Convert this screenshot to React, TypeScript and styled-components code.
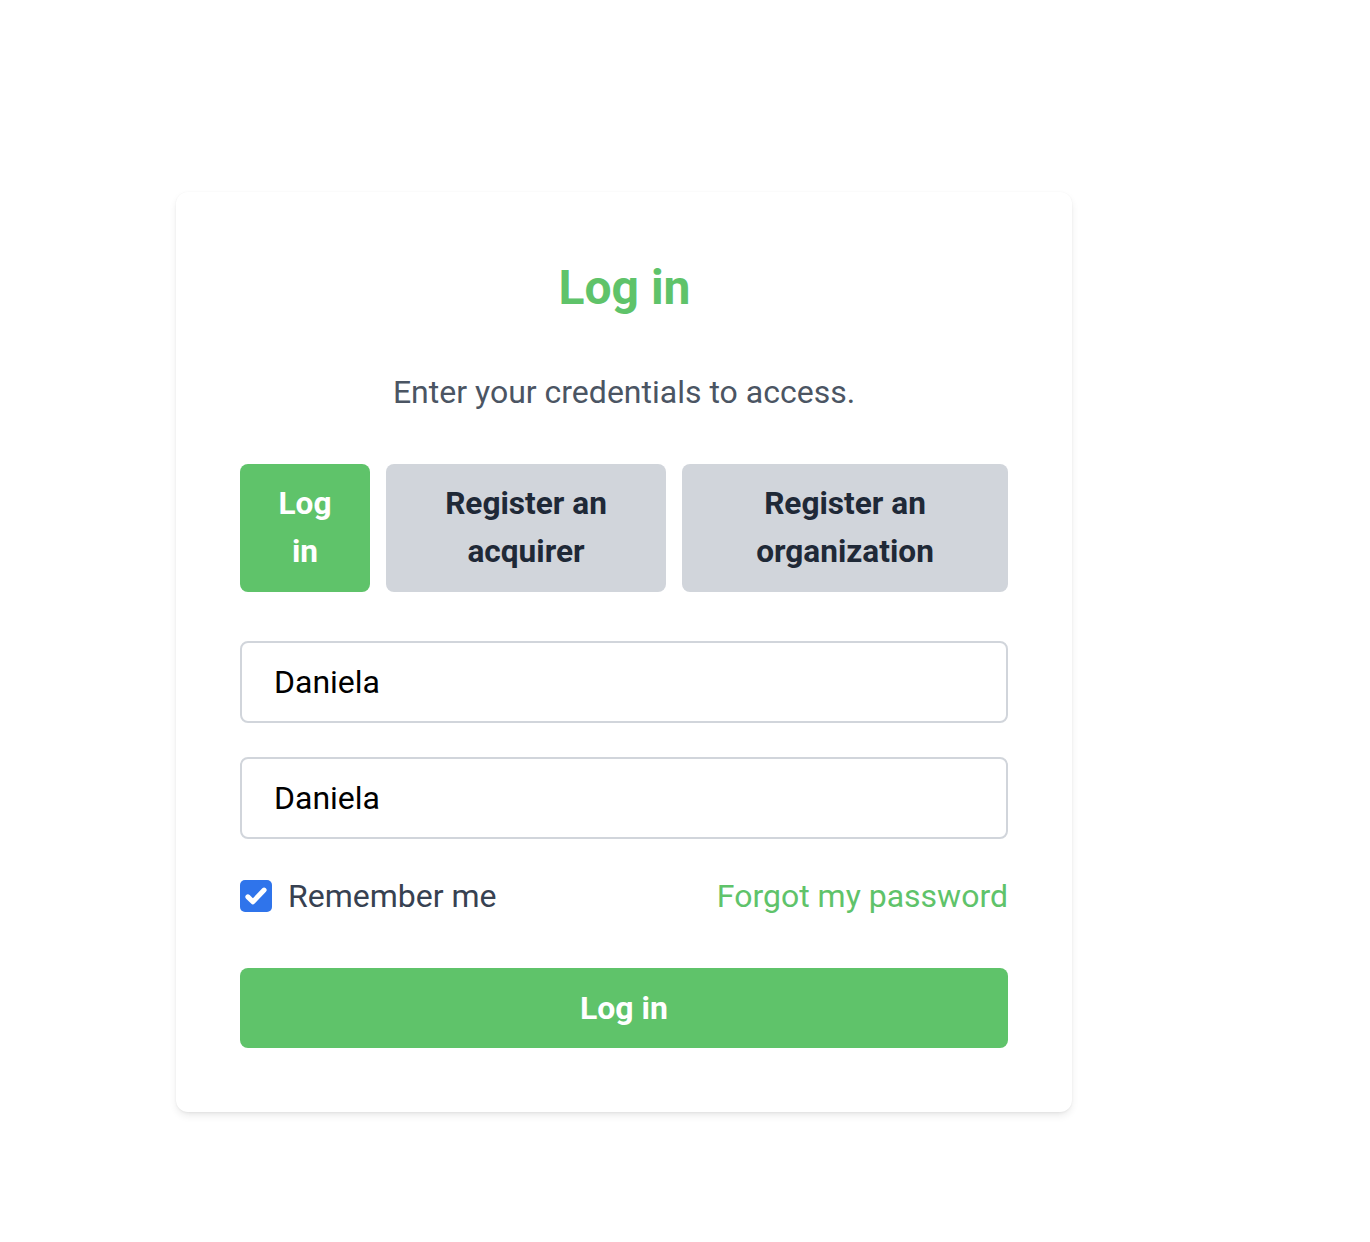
import React from "react";
import styled, { createGlobalStyle } from "styled-components";

const GlobalStyle = createGlobalStyle`
  html, body { margin: 0; padding: 0; background: #ffffff; }
  body { font-family: Roboto, "Liberation Sans", Arial, sans-serif; }
  * { box-sizing: border-box; }
`;

const GREEN = "#5fc36a";

const Page = styled.div`
  min-height: 1242px;
  padding: 192px 0 0 176px;
`;

const Card = styled.div`
  width: 896px;
  background: #ffffff;
  border-radius: 12px;
  box-shadow: 0 4px 8px -1px rgba(0, 0, 0, 0.09), 0 2px 4px -2px rgba(0, 0, 0, 0.08), 0 0 2px rgba(0,0,0,0.04);
  padding: 64px;
  display: flex;
  flex-direction: column;
`;

const Title = styled.h1`
  margin: 0 0 0 1px;
  text-align: center;
  color: ${GREEN};
  font-size: 48px;
  line-height: 64px;
  font-weight: 700;
`;

const Subtitle = styled.p`
  margin: 56px 0 0;
  text-align: center;
  color: #4b5563;
  font-size: 32px;
  line-height: 32px;
`;

const Tabs = styled.div`
  margin-top: 56px;
  display: grid;
  grid-template-columns: 130px 280px 1fr;
  gap: 16px;
`;

const Tab = styled.button<{ $active?: boolean }>`
  border: none;
  border-radius: 8px;
  padding: 16px 24px;
  height: 128px;
  font-family: inherit;
  font-size: 31.6px;
  line-height: 48px;
  font-weight: 700;
  text-align: center;
  background: ${(p) => (p.$active ? GREEN : "#d1d5db")};
  color: ${(p) => (p.$active ? "#ffffff" : "#1f2937")};
  cursor: pointer;
`;

const Fields = styled.div`
  margin-top: 49px;
  display: flex;
  flex-direction: column;
  gap: 34px;
`;

const Input = styled.input`
  width: 100%;
  height: 82px;
  border: 2px solid #d1d5db;
  border-radius: 8px;
  padding: 0 32px;
  font-family: inherit;
  font-size: 32px;
  color: #000000;
  background: #ffffff;
  outline: none;
`;

const OptionsRow = styled.div`
  margin-top: 37px;
  height: 40px;
  display: flex;
  align-items: center;
  justify-content: space-between;
`;

const CheckLabel = styled.label`
  display: flex;
  align-items: center;
  gap: 16px;
  font-size: 32px;
  color: #374151;
`;

const CheckBox = styled.span`
  width: 32px;
  height: 32px;
  border-radius: 5px;
  background: #2f74eb;
  display: flex;
  align-items: center;
  justify-content: center;
`;

const ForgotLink = styled.a`
  font-size: 32px;
  color: ${GREEN};
  text-decoration: none;
`;

const SubmitButton = styled.button`
  margin-top: 52px;
  width: 100%;
  height: 80px;
  border: none;
  border-radius: 8px;
  background: ${GREEN};
  color: #ffffff;
  font-family: inherit;
  font-size: 32px;
  font-weight: 700;
  cursor: pointer;
`;

export default function App() {
  return (
    <>
      <GlobalStyle />
      <Page>
        <Card>
          <Title>Log in</Title>
          <Subtitle>Enter your credentials to access.</Subtitle>
          <Tabs>
            <Tab $active>Log in</Tab>
            <Tab>Register an acquirer</Tab>
            <Tab>Register an organization</Tab>
          </Tabs>
          <Fields>
            <Input defaultValue="Daniela" />
            <Input defaultValue="Daniela" />
          </Fields>
          <OptionsRow>
            <CheckLabel>
              <CheckBox>
                <svg width="26" height="26" viewBox="0 0 24 24" fill="none">
                  <path d="M4.5 12.8l4.6 4.6L19.5 6.5" stroke="#ffffff" strokeWidth="4.6" strokeLinecap="round" strokeLinejoin="round" />
                </svg>
              </CheckBox>
              Remember me
            </CheckLabel>
            <ForgotLink href="#">Forgot my password</ForgotLink>
          </OptionsRow>
          <SubmitButton>Log in</SubmitButton>
        </Card>
      </Page>
    </>
  );
}
